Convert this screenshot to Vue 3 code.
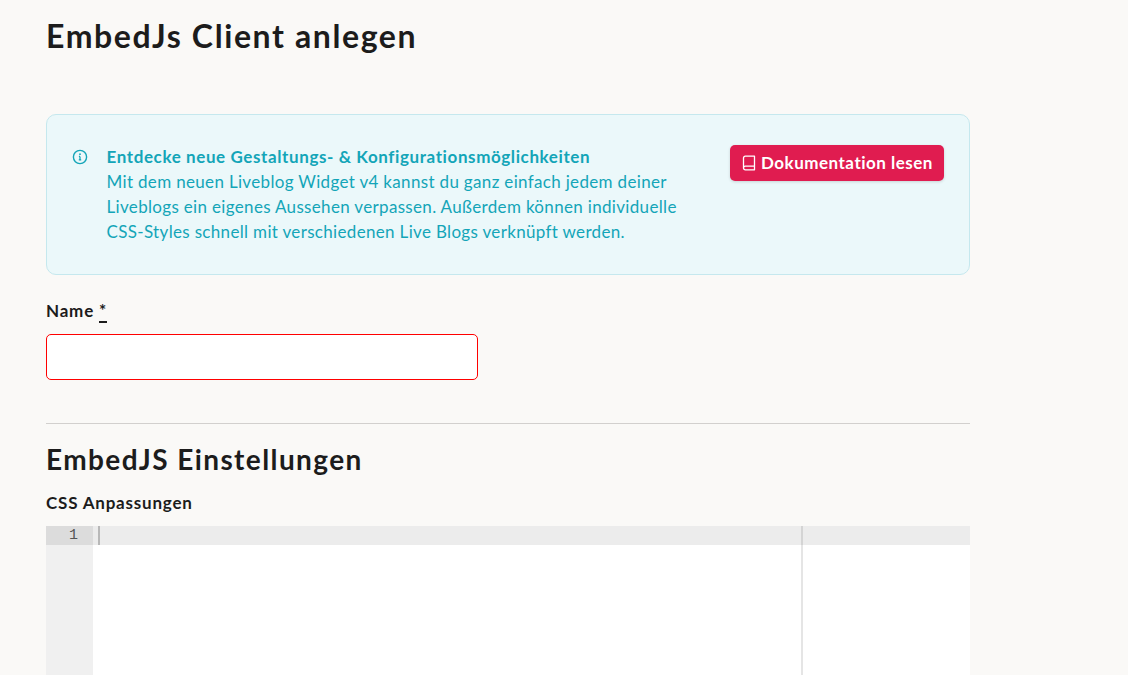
<template>
  <main class="page">
    <h1 class="title">EmbedJs Client anlegen</h1>

    <section class="alert">
      <svg class="alert-icon" width="16" height="16" viewBox="0 0 16 16" fill="none">
        <circle cx="8" cy="8" r="6.6" stroke="currentColor" stroke-width="1.4" />
        <path d="M8 7.4v3.4M6.9 7.4H8M6.8 10.8h2.4" stroke="currentColor" stroke-width="1.3" />
        <circle cx="8" cy="5.2" r="0.9" fill="currentColor" />
      </svg>
      <div class="alert-text">
        <strong>Entdecke neue Gestaltungs- &amp; Konfigurationsmöglichkeiten</strong>
        <p>Mit dem neuen Liveblog Widget v4 kannst du ganz einfach jedem deiner</p>
        <p>Liveblogs ein eigenes Aussehen verpassen. Außerdem können individuelle</p>
        <p>CSS-Styles schnell mit verschiedenen Live Blogs verknüpft werden.</p>
      </div>
      <a class="doc-btn" href="#">
        <svg class="doc-icon" width="14" height="16" viewBox="0 0 14 16" fill="none">
          <path d="M1.5 13V3a1.8 1.8 0 0 1 1.8-1.8h9.2v13.6H3.3a1.8 1.8 0 0 1-1.8-1.8 1.8 1.8 0 0 1 1.8-1.8h9.2" stroke="currentColor" stroke-width="1.3" stroke-linejoin="round" />
        </svg>
        Dokumentation lesen
      </a>
    </section>

    <label class="label name-label">Name <abbr>*</abbr></label>
    <input class="name-input" type="text" />

    <hr class="divider" />

    <h2 class="subtitle">EmbedJS Einstellungen</h2>
    <div class="label css-label">CSS Anpassungen</div>

    <div class="editor">
      <div class="gutter"><div class="line-no">1</div></div>
      <div class="code">
        <div class="active-line"></div>
        <span class="cursor"></span>
        <span class="margin"></span>
      </div>
    </div>
  </main>
</template>

<script setup>
</script>

<style>
html,
body {
  margin: 0;
  height: 100%;
  overflow: hidden;
  background: #faf9f7;
}
</style>

<style scoped>
.page {
  box-sizing: border-box;
  width: 970px;
  height: 675px;
  padding: 0 0 0 46px;
  overflow: hidden;
  font-family: Lato, "Noto Sans", sans-serif;
  color: #1c1c1c;
}

.title {
  margin: 0;
  padding-top: 16px;
  height: 114px;
  box-sizing: border-box;
  font-size: 32px;
  line-height: 40px;
  font-weight: 700;
  letter-spacing: 1.6px;
}

.alert {
  box-sizing: border-box;
  display: flex;
  align-items: flex-start;
  height: 161px;
  padding: 30px 25px 0 25px;
  background: #ebf8fa;
  border: 1px solid #c5e8ee;
  border-radius: 10px;
  color: #13a5b8;
}

.alert-icon {
  flex: none;
  margin-top: 4px;
}

.alert-text {
  flex: 1;
  margin: -1px 0 0 18.5px;
  font-size: 17px;
  line-height: 25px;
  letter-spacing: 0.33px;
}

.alert-text strong {
  display: block;
  font-weight: 700;
  letter-spacing: 0.6px;
}

.alert-text p {
  margin: 0;
  white-space: nowrap;
}

.doc-btn {
  flex: none;
  display: flex;
  align-items: center;
  gap: 5px;
  box-sizing: border-box;
  width: 214px;
  height: 36px;
  padding: 0 0 2px 12px;
  background: #e01c50;
  border-radius: 5px;
  box-shadow: 0 1px 3px rgba(0, 0, 0, 0.15);
  color: #fff;
  font-size: 17px;
  font-weight: 700;
  letter-spacing: 0.5px;
  text-decoration: none;
  white-space: nowrap;
}

.doc-icon {
  flex: none;
  margin-top: 2px;
}

.label {
  display: block;
  font-size: 17px;
  font-weight: 700;
  line-height: 20px;
  letter-spacing: 0.8px;
}

.name-label {
  margin-top: 26px;
}

.name-label abbr {
  text-decoration: none;
  border-bottom: 2px solid #1c1c1c;
}

.name-input {
  display: block;
  box-sizing: border-box;
  width: 432px;
  height: 46px;
  margin-top: 13px;
  background: #fff;
  border: 1px solid #f00;
  border-radius: 5px;
  outline: none;
}

.divider {
  height: 1px;
  margin: 43px 0 0;
  border: 0;
  background: #d2d0ce;
}

.subtitle {
  margin: 15px 0 0;
  font-size: 28px;
  line-height: 40px;
  font-weight: 700;
  letter-spacing: 1.4px;
}

.css-label {
  margin-top: 14px;
}

.editor {
  display: flex;
  height: 149px;
  margin-top: 13px;
  background: #fff;
}

.gutter {
  flex: none;
  width: 47px;
  background: #f0f0f0;
}

.line-no {
  height: 19px;
  padding-right: 15px;
  background: #dcdcdc;
  color: #555;
  font-family: "Liberation Mono", monospace;
  font-size: 15px;
  line-height: 19px;
  text-align: right;
}

.code {
  position: relative;
  flex: 1;
}

.active-line {
  height: 19px;
  background: #ececec;
}

.cursor {
  position: absolute;
  top: 0;
  left: 5px;
  width: 2px;
  height: 19px;
  background: #b8b8b8;
}

.margin {
  position: absolute;
  top: 0;
  bottom: 0;
  left: 708px;
  width: 2px;
  background: rgba(0, 0, 0, 0.1);
}
</style>
